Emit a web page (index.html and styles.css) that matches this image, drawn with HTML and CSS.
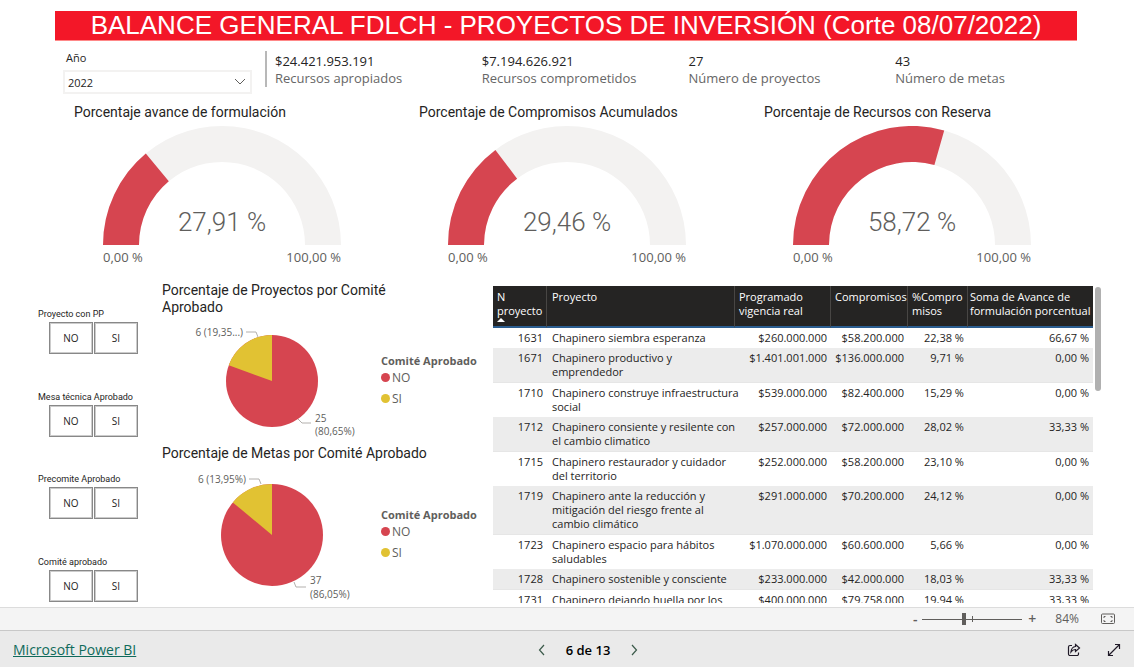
FILE: index.html
```html
<!DOCTYPE html>
<html lang="es">
<head>
<meta charset="utf-8">
<title>Balance general FDLCH</title>
<link rel="stylesheet" href="styles.css">
</head>
<body>
<main class="report">
  <h1 class="banner">BALANCE GENERAL FDLCH - PROYECTOS DE INVERSIÓN (Corte 08/07/2022)</h1>

  <section class="summary">
    <div class="year">
      <label class="year-label" for="year">Año</label>
      <div class="year-box">
        <select id="year" class="year-select"><option>2022</option></select>
        <svg class="year-arrow" width="12" height="8" viewBox="0 0 12 8"><path d="M1 1l5 5 5-5" fill="none" stroke="#605e5c"/></svg>
      </div>
    </div>
    <dl class="kpis">
      <div class="kpi"><dd>$24.421.953.191</dd><dt>Recursos apropiados</dt></div>
      <div class="kpi"><dd>$7.194.626.921</dd><dt>Recursos comprometidos</dt></div>
      <div class="kpi"><dd>27</dd><dt>Número de proyectos</dt></div>
      <div class="kpi"><dd>43</dd><dt>Número de metas</dt></div>
    </dl>
  </section>

  <section class="gauges">
    <article class="gauge">
      <h2 class="title">Porcentaje avance de formulación</h2>
      <svg class="gauge-chart" viewBox="0 0 238 142" role="img" aria-label="27,91 %">
        <path class="track" d="M0 119A119 119 0 0 1 238 119H202A83 83 0 0 0 36 119Z"/>
        <path class="fill" d="M0 119A119 119 0 0 1 42.8 27.6L65.8 55.2A83 83 0 0 0 36 119Z"/>
        <text class="value" x="119" y="105">27,91 %</text>
        <text class="limit" x="0" y="136">0,00 %</text>
        <text class="limit end" x="238" y="136">100,00 %</text>
      </svg>
    </article>
    <article class="gauge">
      <h2 class="title">Porcentaje de Compromisos Acumulados</h2>
      <svg class="gauge-chart" viewBox="0 0 238 142" role="img" aria-label="29,46 %">
        <path class="track" d="M0 119A119 119 0 0 1 238 119H202A83 83 0 0 0 36 119Z"/>
        <path class="fill" d="M0 119A119 119 0 0 1 47.4 23.9L69.1 52.7A83 83 0 0 0 36 119Z"/>
        <text class="value" x="119" y="105">29,46 %</text>
        <text class="limit" x="0" y="136">0,00 %</text>
        <text class="limit end" x="238" y="136">100,00 %</text>
      </svg>
    </article>
    <article class="gauge">
      <h2 class="title">Porcentaje de Recursos con Reserva</h2>
      <svg class="gauge-chart" viewBox="0 0 238 142" role="img" aria-label="58,72 %">
        <path class="track" d="M0 119A119 119 0 0 1 238 119H202A83 83 0 0 0 36 119Z"/>
        <path class="fill" d="M0 119A119 119 0 0 1 151.2 4.4L141.4 39.1A83 83 0 0 0 36 119Z"/>
        <text class="value" x="119" y="105">58,72 %</text>
        <text class="limit" x="0" y="136">0,00 %</text>
        <text class="limit end" x="238" y="136">100,00 %</text>
      </svg>
    </article>
  </section>

  <section class="details">
    <div class="slicers">
      <fieldset class="slicer"><legend>Proyecto con PP</legend><div class="tiles"><button>NO</button><button>SI</button></div></fieldset>
      <fieldset class="slicer"><legend>Mesa técnica Aprobado</legend><div class="tiles"><button>NO</button><button>SI</button></div></fieldset>
      <fieldset class="slicer"><legend>Precomite Aprobado</legend><div class="tiles"><button>NO</button><button>SI</button></div></fieldset>
      <fieldset class="slicer"><legend>Comité aprobado</legend><div class="tiles"><button>NO</button><button>SI</button></div></fieldset>
    </div>

    <div class="pies">
      <article class="pie">
        <h2 class="title pie-title">Porcentaje de Proyectos por Comité Aprobado</h2>
        <div class="pie-body">
          <svg class="pie-chart" width="204" height="124" viewBox="0 0 204 124">
            <circle class="fill" cx="110" cy="65" r="46"/>
            <path class="second" d="M110 65V19A46 46 0 0 0 66.800 49.200Z"/>
            <path class="leader" d="M84 16H94L96 21M136 103L140 107H149"/>
            <text class="callout end" x="81" y="20">6 (19,35...)</text>
            <text class="callout" x="153" y="106">25</text>
            <text class="callout" x="153" y="119">(80,65%)</text>
          </svg>
          <div class="key">
            <h3>Comité Aprobado</h3>
            <ul><li class="no">NO</li><li class="si">SI</li></ul>
          </div>
        </div>
      </article>
      <article class="pie">
        <h2 class="title pie-title">Porcentaje de Metas por Comité Aprobado</h2>
        <div class="pie-body">
          <svg class="pie-chart" width="204" height="140" viewBox="0 0 204 140">
            <circle class="fill" cx="110" cy="73" r="51"/>
            <path class="second" d="M110 73V22A51 51 0 0 0 70.800 40.400Z"/>
            <path class="leader" d="M87 17H97L99 22M132 120L134 125H144"/>
            <text class="callout end" x="84" y="21">6 (13,95%)</text>
            <text class="callout" x="148" y="122">37</text>
            <text class="callout" x="148" y="136">(86,05%)</text>
          </svg>
          <div class="key">
            <h3>Comité Aprobado</h3>
            <ul><li class="no">NO</li><li class="si">SI</li></ul>
          </div>
        </div>
      </article>
    </div>

    <div class="grid-view">
      <div class="grid-clip">
      <table class="projects">
        <colgroup><col class="c-id"><col class="c-name"><col class="c-plan"><col class="c-comp"><col class="c-pct"><col class="c-sum"></colgroup>
        <thead>
          <tr><th>N proyecto<span class="sort"></span></th><th>Proyecto</th><th>Programado vigencia real</th><th>Compromisos</th><th>%Compro<wbr>misos</th><th>Soma de Avance de<br>formulación porcentual</th></tr>
        </thead>
        <tbody>
          <tr><td>1631</td><td>Chapinero siembra esperanza</td><td>$260.000.000</td><td>$58.200.000</td><td>22,38 %</td><td>66,67 %</td></tr>
          <tr><td>1671</td><td>Chapinero productivo y<br>emprendedor</td><td>$1.401.001.000</td><td>$136.000.000</td><td>9,71 %</td><td>0,00 %</td></tr>
          <tr><td>1710</td><td>Chapinero construye infraestructura<br>social</td><td>$539.000.000</td><td>$82.400.000</td><td>15,29 %</td><td>0,00 %</td></tr>
          <tr><td>1712</td><td>Chapinero consiente y resilente con<br>el cambio climatico</td><td>$257.000.000</td><td>$72.000.000</td><td>28,02 %</td><td>33,33 %</td></tr>
          <tr><td>1715</td><td>Chapinero restaurador y cuidador<br>del territorio</td><td>$252.000.000</td><td>$58.200.000</td><td>23,10 %</td><td>0,00 %</td></tr>
          <tr><td>1719</td><td>Chapinero ante la reducción y<br>mitigación del riesgo frente al<br>cambio climático</td><td>$291.000.000</td><td>$70.200.000</td><td>24,12 %</td><td>0,00 %</td></tr>
          <tr><td>1723</td><td>Chapinero espacio para hábitos<br>saludables</td><td>$1.070.000.000</td><td>$60.600.000</td><td>5,66 %</td><td>0,00 %</td></tr>
          <tr><td>1728</td><td>Chapinero sostenible y consciente</td><td>$233.000.000</td><td>$42.000.000</td><td>18,03 %</td><td>33,33 %</td></tr>
          <tr><td>1731</td><td>Chapinero dejando huella por los</td><td>$400.000.000</td><td>$79.758.000</td><td>19,94 %</td><td>33,33 %</td></tr>
        </tbody>
      </table>
      </div>
      <div class="scrollbar"></div>
    </div>
  </section>
</main>

<div class="zoombar">
  <button class="step" aria-label="Alejar">-</button>
  <input class="zoom" type="range" min="0" max="100" value="41" aria-label="Zoom">
  <button class="step" aria-label="Acercar">+</button>
  <span class="percent">84%</span>
  <button class="icon" aria-label="Ajustar a la página">
    <svg width="16" height="12" viewBox="0 0 16 12" fill="none" stroke="#605e5c"><rect x="1.500" y="1" width="13" height="9.500" rx="1"/><path d="M4 5V3.500H5.500M10.500 3.500H12V5M12 7V8.500H10.500M5.500 8.500H4V7"/></svg>
  </button>
</div>

<footer class="footer">
  <a class="brand" href="#">Microsoft Power BI</a>
  <nav class="pager">
    <button class="icon" aria-label="Anterior"><svg width="8" height="12" viewBox="0 0 8 12"><path d="M6 1L1.500 6L6 11" fill="none" stroke="#3b5a4a" stroke-width="1.200"/></svg></button>
    <span>6 de 13</span>
    <button class="icon" aria-label="Siguiente"><svg width="8" height="12" viewBox="0 0 8 12"><path d="M2 1L6.500 6L2 11" fill="none" stroke="#3b5a4a" stroke-width="1.200"/></svg></button>
  </nav>
  <div class="actions">
    <button class="icon" aria-label="Compartir"><svg width="14" height="14" viewBox="0 0 14 14" fill="none" stroke="#201a28" stroke-width="1.200"><path d="M5 2.500H3A1.500 1.500 0 0 0 1.500 4V11A1.500 1.500 0 0 0 3 12.500H10A1.500 1.500 0 0 0 11.500 11V9.500"/><path d="M8.500 1.500L12.500 5L8.500 8.500V6.500C6.500 6.400 5.200 7.200 4 8.800C4.300 6 5.800 3.700 8.500 3.500Z"/></svg></button>
    <button class="icon" aria-label="Pantalla completa"><svg width="14" height="14" viewBox="0 0 14 14" fill="none" stroke="#201a28" stroke-width="1.200"><path d="M1.500 12.500L12.500 1.500M8 1.500H12.500V6M1.500 8V12.500H6"/></svg></button>
  </div>
</footer>
</body>
</html>
```

FILE: styles.css
```css
* { box-sizing: border-box; }
body {
  margin: 0;
  min-height: 100vh;
  display: flex;
  flex-direction: column;
  background: #fff;
  color: #252423;
  font: 12px/16px "Open Sans", "Noto Sans", sans-serif;
}
h1, h2, h3, dl, dd, ul, fieldset { margin: 0; padding: 0; }
button { font: inherit; color: inherit; padding: 0; cursor: pointer; }
svg { display: block; }

.report { flex: 1; padding-top: 11px; }
.banner {
  margin: 0 57px 0 55px;
  background: #f31728;
  border-bottom: 1px solid #f88;
  color: #fff;
  font: 26px/29px "Liberation Sans", Arial, sans-serif;
  text-align: center;
  white-space: nowrap;
}

.summary {
  display: grid;
  grid-template-columns: 189fr 837fr;
  gap: 13px;
  padding: 10px 32px 0 63px;
}
.year-label { display: block; padding-left: 3px; line-height: 14px; font-size: 11px; }
.year-box {
  display: grid;
  align-items: center;
  margin-top: 5px;
  border: 2px solid #f3f2f1;
}
.year-select {
  grid-area: 1 / 1;
  appearance: none;
  border: 0;
  background: none;
  height: 20px;
  padding: 0 3px;
  color: inherit;
  font: 11px "Open Sans", sans-serif;
}
.year-arrow { grid-area: 1 / 1; justify-self: end; margin-right: 4px; pointer-events: none; }

.kpis {
  display: grid;
  grid-template-columns: repeat(4, 1fr);
  align-self: start;
  height: 36px;
  border-left: 2px solid #b8b8b8;
  padding-left: 8px;
}
.kpi { display: flex; flex-direction: column; padding-top: 2px; line-height: 17px; font-size: 13px; }
.kpi dt { color: #666; }

.gauges {
  display: grid;
  grid-template-columns: repeat(3, 1fr);
  padding: 10px 25px 0 74px;
}
.title { font: 14px/17px Roboto, sans-serif; color: #252423; }
.gauge-chart { width: 238px; margin: 5px 0 0 29px; }
.track { fill: #f3f2f1; }
.fill { fill: #d64550; }
.value { font: 300 26px Roboto, sans-serif; fill: #605e5c; text-anchor: middle; }
.limit { font: 13px "Open Sans", sans-serif; fill: #605e5c; }
.end { text-anchor: end; }

.details {
  display: grid;
  grid-template-columns: 124fr 331fr 608fr;
  padding: 14px 33px 0 38px;
}
.slicers {
  display: flex;
  flex-direction: column;
  justify-content: space-between;
  padding: 26px 0 1px;
}
.slicer { border: 0; min-width: 0; }
.slicer legend { padding: 0; font: 9px/12px Roboto, sans-serif; white-space: nowrap; }
.tiles { display: flex; gap: 1px; padding: 2px 0 0 11px; }
.tiles button {
  width: 44px;
  height: 32px;
  background: #fff;
  border: 1px solid #888;
  box-shadow: inset 0 0 0 1px #ccc;
  font-size: 10px;
}

.pies { display: flex; flex-direction: column; gap: 5px; }
.pie-title { max-width: 270px; }
.pie-body { display: flex; gap: 15px; align-items: center; }
.second { fill: #e1c233; }
.leader { fill: none; stroke: #b3b0ad; }
.callout { font: 10px "Open Sans", sans-serif; fill: #605e5c; }
.key { padding-top: 3px; color: #605e5c; }
.key h3 { font-size: 11px; line-height: 17px; white-space: nowrap; font-weight: 700; }
.key ul { list-style: none; display: grid; gap: 4px; font-size: 12px; line-height: 17px; }
.key li { display: flex; align-items: center; gap: 2px; }
.key li::before { content: ""; width: 9px; height: 9px; border-radius: 50%; background: #d64550; }
.key .si::before { background: #e1c233; }

.grid-view { display: flex; gap: 2px; align-items: flex-start; padding-top: 4px; }
.grid-clip { flex: 1; height: 317px; overflow: hidden; }
.projects {
  width: 100%;
  table-layout: fixed;
  border-collapse: separate;
  border-spacing: 0;
  font-size: 11px;
  line-height: 14px;
}
.c-id { width: 9%; }
.c-name { width: 31.333%; }
.c-plan { width: 16%; }
.c-comp { width: 12.833%; }
.c-pct { width: 10%; }
.projects th {
  height: 42px;
  padding: 4px 1px 0 4px;
  background: #252423;
  border-right: 1px solid #484644;
  border-bottom: 2px solid #2b5d8f;
  color: #fff;
  font-weight: 400;
  text-align: left;
  vertical-align: top;
}
.projects th:last-child { border-right: 0; padding: 4px 0 0 2px; white-space: nowrap; }
.projects td { padding: 3px 4px; text-align: right; vertical-align: top; white-space: nowrap; }
.projects td:nth-child(2) { text-align: left; }
.projects th:nth-child(2), .projects td:nth-child(2) { padding-left: 5px; }
.projects tr:nth-child(even) td { background: #ececec; border-bottom: 1px solid #e6e6e6; }
.sort { display: block; width: 0; border: 4px solid transparent; border-top: 0; border-bottom-color: #fff; }
.scrollbar { width: 6px; height: 104px; margin-top: 1px; border-radius: 3px; background: #b0b0b0; }

.zoombar {
  display: flex;
  align-items: center;
  justify-content: flex-end;
  height: 23px;
  padding-right: 18px;
  background: #f4f4f4;
  border-top: 1px solid #dcdcdc;
  color: #605e5c;
}
.step { width: 14px; border: 0; background: none; font-size: 14px; font-weight: 600; }
.zoom { width: 100px; height: 14px; margin: 0 3px 0 0; appearance: none; background: linear-gradient(#605e5c, #605e5c) center / 100% 1px no-repeat, linear-gradient(#605e5c, #605e5c) center / 1px 6px no-repeat; }
.zoom::-webkit-slider-thumb { appearance: none; width: 4px; height: 12px; background: #605e5c; }
.percent { margin: 0 21px 0 16px; font-size: 12px; }
.icon { border: 0; background: none; }

.footer {
  display: grid;
  grid-template-columns: 1fr auto 1fr;
  align-items: center;
  height: 37px;
  padding: 2px 13px 0;
  background: #eaeaea;
  border-top: 1px solid #c8c8c8;
}
.brand { color: #0f6a5b; font-size: 14px; justify-self: start; }
.pager { display: flex; align-items: center; gap: 20px; margin-left: 42px; color: #000; font-size: 13px; font-weight: 600; }
.actions { display: flex; gap: 26px; justify-self: end; }
```
